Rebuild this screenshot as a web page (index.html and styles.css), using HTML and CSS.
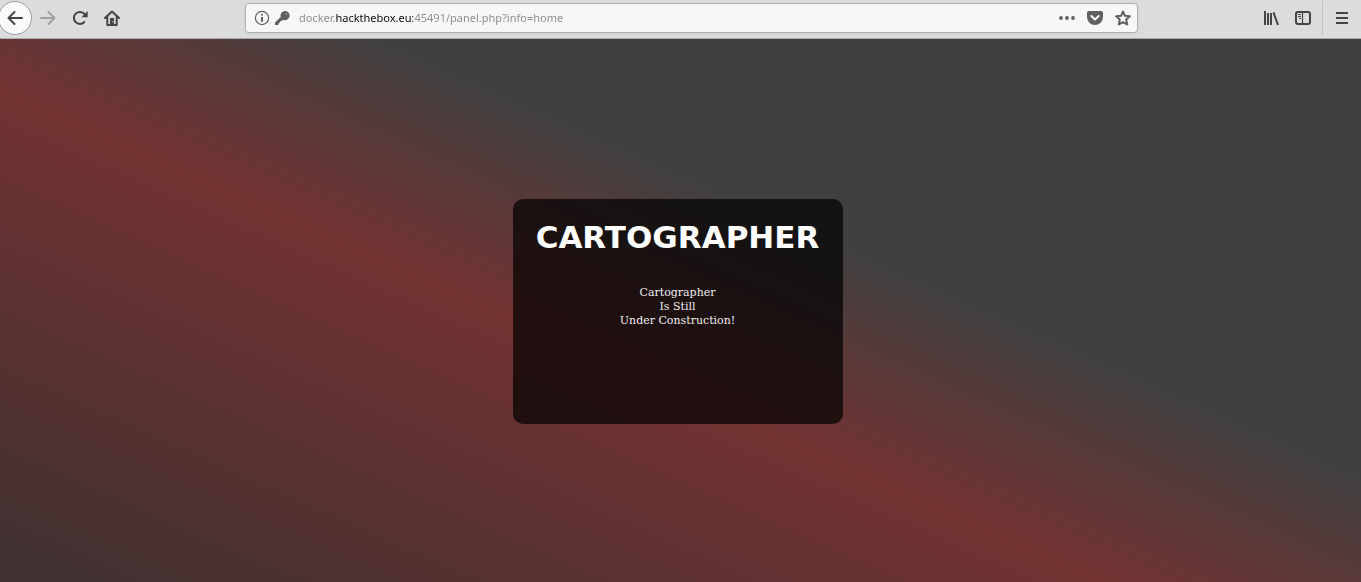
FILE: index.html
```html
<!DOCTYPE html>
<html lang="en">
<head>
<meta charset="utf-8">
<title>Cartographer</title>
<link rel="stylesheet" href="styles.css">
</head>
<body>
<header class="toolbar">
  <nav class="group" aria-label="Navigation">
    <button class="tool back" aria-label="Back"><svg class="icon" viewBox="0 0 16 16"><path class="line" d="M15 8H2M7.500 2 1.500 8l6 6"/></svg></button>
    <button class="tool" aria-label="Forward" disabled><svg class="icon" viewBox="0 0 16 16"><path class="line" d="M1 8h13M8.500 2l6 6-6 6"/></svg></button>
    <button class="tool" aria-label="Reload"><svg class="icon" viewBox="0 0 16 16"><path class="line" d="M12.300 12A6 6 0 1 1 12.500 4L14 5.800"/><path d="M15.700 1v6.200H9.500z"/></svg></button>
    <button class="tool" aria-label="Home"><svg class="icon" viewBox="0 0 16 16"><path class="line" d="M1 8l7-6.500L15 8M3.300 7v8h9.400V7"/><path d="M6 8h4v7H6z"/><path class="hole" d="M8.300 11.200h1v1.300h-1z"/></svg></button>
  </nav>
  <div class="space"></div>
  <div class="address">
    <svg class="icon info" viewBox="0 0 16 16"><circle class="thin" cx="8" cy="8" r="6.600"/><circle cx="8" cy="4.800" r="1"/><path d="M7 7h2v4.800H7z"/></svg>
    <svg class="icon key" viewBox="0 0 16 16"><path d="M11 1a4.600 4.600 0 0 1 0 9.200c-.9 0-1.600-.1-2.200-.5L7.200 11.300H6v1.300l-1.200.2v1.400L3.800 15H1v-2.600l5.700-5.300A4.600 4.600 0 0 1 11 1z"/><circle class="keyhole" cx="12.500" cy="4" r="1"/></svg>
    <input class="url" type="text" aria-label="Address" spellcheck="false" value="docker.hackthebox.eu:45491/panel.php?info=home">
    <button class="action" aria-label="Page actions"><svg class="icon" viewBox="0 0 16 16"><circle cx="2" cy="8" r="1.900"/><circle cx="8" cy="8" r="1.900"/><circle cx="14" cy="8" r="1.900"/></svg></button>
    <button class="action" aria-label="Save to Pocket"><svg class="icon" viewBox="0 0 16 16"><path d="M1.800 1h12.400A1.800 1.800 0 0 1 16 2.800V7A8 8 0 0 1 0 7V2.800A1.800 1.800 0 0 1 1.800 1z"/><path class="check" d="M4.300 6 8 9.500 11.700 6"/></svg></button>
    <button class="action" aria-label="Bookmark"><svg class="icon" viewBox="0 0 16 16"><path class="line" d="M8 1.500l1.900 4.300 4.900.5-3.600 3.300 1 4.900L8 12.100l-4.200 2.400 1-4.900L1.200 6.300l4.900-.5z"/></svg></button>
  </div>
  <div class="space"></div>
  <div class="group">
    <button class="tool" aria-label="Library"><svg class="icon" viewBox="0 0 16 16"><path class="bar" d="M2 1v14M5 3v12M8 3v12M10.500 2.300 15 15"/></svg></button>
    <button class="tool" aria-label="Sidebars"><svg class="icon" viewBox="0 0 16 16"><rect class="line" x="1" y="2" width="14" height="12" rx="2"/><path class="thin" d="M7.500 2v12M3 4.500h3M3 6.500h3M4 8.500h2"/></svg></button>
    <span class="divider"></span>
    <button class="tool" aria-label="Menu"><svg class="icon" viewBox="0 0 16 16"><path class="bar" d="M2 3h12M2 8h12M2 13h12"/></svg></button>
  </div>
</header>
<main class="page">
  <section class="panel">
    <h1 class="title">CARTOGRAPHER</h1>
    <p class="notice">Cartographer<br>Is Still<br>Under Construction!</p>
  </section>
</main>
</body>
</html>
```
FILE: styles.css
```css
* { box-sizing: border-box; }

body {
  margin: 0;
  min-height: 100vh;
  display: flex;
  flex-direction: column;
}

.toolbar {
  display: flex;
  align-items: center;
  padding: 1px 3px 3px 0;
  background: #dcdcdc;
  border-bottom: 1px solid #a9abab;
}

.group { display: flex; align-items: center; }

.space { flex: 118 1 0; }

.tool,
.action {
  display: flex;
  align-items: center;
  justify-content: center;
  width: 32px;
  height: 32px;
  padding: 0;
  border: 0;
  background: none;
  color: #444;
}

.tool:disabled { color: #a0a0a0; }

.back {
  width: 34px;
  height: 34px;
  margin-left: -2px;
  border: 1px solid #9c9c9c;
  border-radius: 50%;
  background: #fafafa;
}

.divider {
  width: 1px;
  height: 34px;
  margin: 0 3px;
  background: #c2c2c2;
}

.icon {
  width: 16px;
  height: 16px;
  flex: none;
  fill: currentColor;
}

.line {
  fill: none;
  stroke: currentColor;
  stroke-width: 2;
  stroke-linecap: round;
  stroke-linejoin: round;
}

.bar { fill: none; stroke: currentColor; stroke-width: 2; }
.thin { fill: none; stroke: currentColor; stroke-width: 1.2; }
.hole { fill: #dcdcdc; }
.keyhole { fill: #8a8a8a; }

.check {
  fill: none;
  stroke: #f7f7f7;
  stroke-width: 2;
  stroke-linecap: round;
  stroke-linejoin: round;
}

.address {
  flex: 891 1 0;
  min-width: 0;
  height: 30px;
  display: flex;
  align-items: center;
  padding-left: 8px;
  border: 1px solid #b0b0b0;
  border-radius: 4px;
  background: #f7f7f7;
  box-shadow: 0 1px 3px rgba(0, 0, 0, 0.06);
  color: #606060;
}

.key { margin-left: 4px; }

.url {
  flex: 1;
  min-width: 0;
  height: 28px;
  margin-left: 9px;
  padding: 0;
  border: 0;
  outline: 0;
  font: 11px/28px "Noto Sans", sans-serif;
  color: transparent;
  background: linear-gradient(90deg, #8a8a8a 37px, #0c0c0c 37px 114px, #8a8a8a 114px);
  -webkit-background-clip: text;
  background-clip: text;
}

.action { width: 28px; height: 28px; color: #606060; }

.page {
  flex: 1;
  display: flex;
  align-items: center;
  justify-content: center;
  padding: 20px 26px 18px 20px;
  background: linear-gradient(204deg, #404040 38%, #733232 57%, #3d3131 100%);
}

.panel {
  width: 330px;
  min-height: 225px;
  padding: 18px 0;
  border-radius: 10px;
  background: rgba(0, 0, 0, 0.7);
  color: #fff;
  text-align: center;
}

.title {
  margin: 0 0 29px;
  font: bold 31px/40px "DejaVu Sans", sans-serif;
}

.notice {
  margin: 0;
  font: 11px/14px "DejaVu Serif", serif;
  color: #eee;
}
```
